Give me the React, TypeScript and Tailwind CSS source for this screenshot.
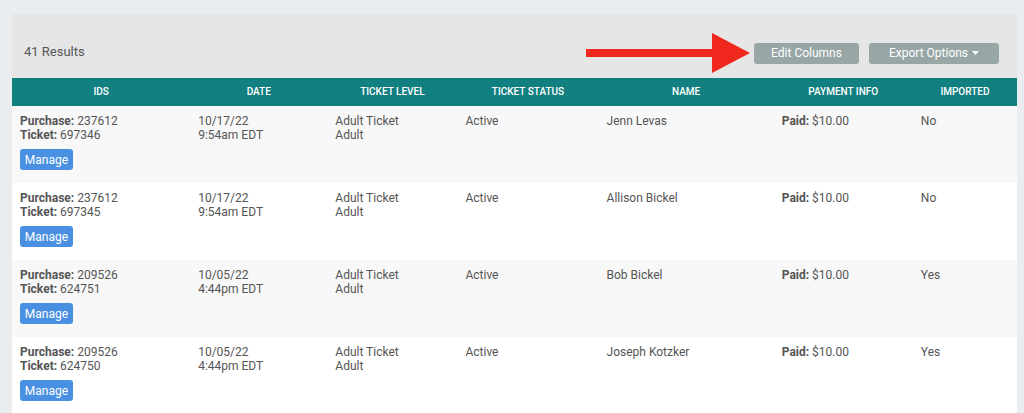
import React from "react";

type Row = {
  purchase: string;
  ticket: string;
  date: string;
  time: string;
  name: string;
  imported: string;
};

const rows: Row[] = [
  { purchase: "237612", ticket: "697346", date: "10/17/22", time: "9:54am EDT", name: "Jenn Levas", imported: "No" },
  { purchase: "237612", ticket: "697345", date: "10/17/22", time: "9:54am EDT", name: "Allison Bickel", imported: "No" },
  { purchase: "209526", ticket: "624751", date: "10/05/22", time: "4:44pm EDT", name: "Bob Bickel", imported: "Yes" },
  { purchase: "209526", ticket: "624750", date: "10/05/22", time: "4:44pm EDT", name: "Joseph Kotzker", imported: "Yes" },
];

const columns = [
  { label: "IDS", width: "w-[178px]" },
  { label: "DATE", width: "w-[137px]" },
  { label: "TICKET LEVEL", width: "w-[130px]" },
  { label: "TICKET STATUS", width: "w-[141px]" },
  { label: "NAME", width: "w-[175px]" },
  { label: "PAYMENT INFO", width: "w-[139px]" },
  { label: "IMPORTED", width: "w-[104px]" },
];

const cell = "px-2 pt-2 align-top";

export default function App() {
  return (
    <div className="h-[413px] overflow-hidden bg-[#e9edf0] pl-3 pt-[14px] font-['Roboto',sans-serif] text-[12px] leading-[14px] text-[#555]">
      <div className="w-[1005px] bg-white">
        <div className="flex h-16 items-start bg-[#e6e6e6] pl-3 pr-[18px] pt-[19px]">
          <span className="mt-[11px] text-[13px] leading-[16px] text-[#555]">41 Results</span>
          <div className="ml-auto flex items-center">
            <svg width="166" height="40" viewBox="0 0 166 40" className="mr-[2px]">
              <rect x="0" y="16" width="130" height="8" fill="#f0271d" />
              <polygon points="126,0 164,20 126,40" fill="#f0271d" />
            </svg>
            <button className="h-[21px] w-[105px] rounded-[3px] bg-[#98a6a6] text-[12px] text-white">Edit Columns</button>
            <button className="ml-[10px] flex h-[21px] w-[130px] items-center justify-center gap-1 rounded-[3px] bg-[#98a6a6] text-[12px] text-white">
              Export Options
              <svg width="7" height="4" viewBox="0 0 7 4"><polygon points="0,0 7,0 3.5,4" fill="#fff" /></svg>
            </button>
          </div>
        </div>
        <table className="w-full table-fixed border-collapse">
          <thead>
            <tr className="h-[28px] bg-[#128080] text-[10px] font-medium text-white">
              {columns.map((c) => (
                <th key={c.label} className={`${c.width} text-center font-medium`}>{c.label}</th>
              ))}
            </tr>
          </thead>
          <tbody>
            {rows.map((r, i) => (
              <tr key={r.ticket} className={`h-[77px] ${i % 2 === 0 ? "bg-[#f8f8f8]" : "bg-white"}`}>
                <td className={cell}>
                  <div><b className="font-bold">Purchase:</b> {r.purchase}</div>
                  <div><b className="font-bold">Ticket:</b> {r.ticket}</div>
                  <button className="mt-[7px] h-[21px] w-[53px] rounded-[3px] bg-[#4a90e2] text-[12px] text-white">Manage</button>
                </td>
                <td className={cell}>
                  <div>{r.date}</div>
                  <div>{r.time}</div>
                </td>
                <td className={cell}>
                  <div>Adult Ticket</div>
                  <div>Adult</div>
                </td>
                <td className={cell}>Active</td>
                <td className={cell}>{r.name}</td>
                <td className={cell}><b className="font-bold">Paid:</b> $10.00</td>
                <td className={cell}>{r.imported}</td>
              </tr>
            ))}
          </tbody>
        </table>
      </div>
    </div>
  );
}
